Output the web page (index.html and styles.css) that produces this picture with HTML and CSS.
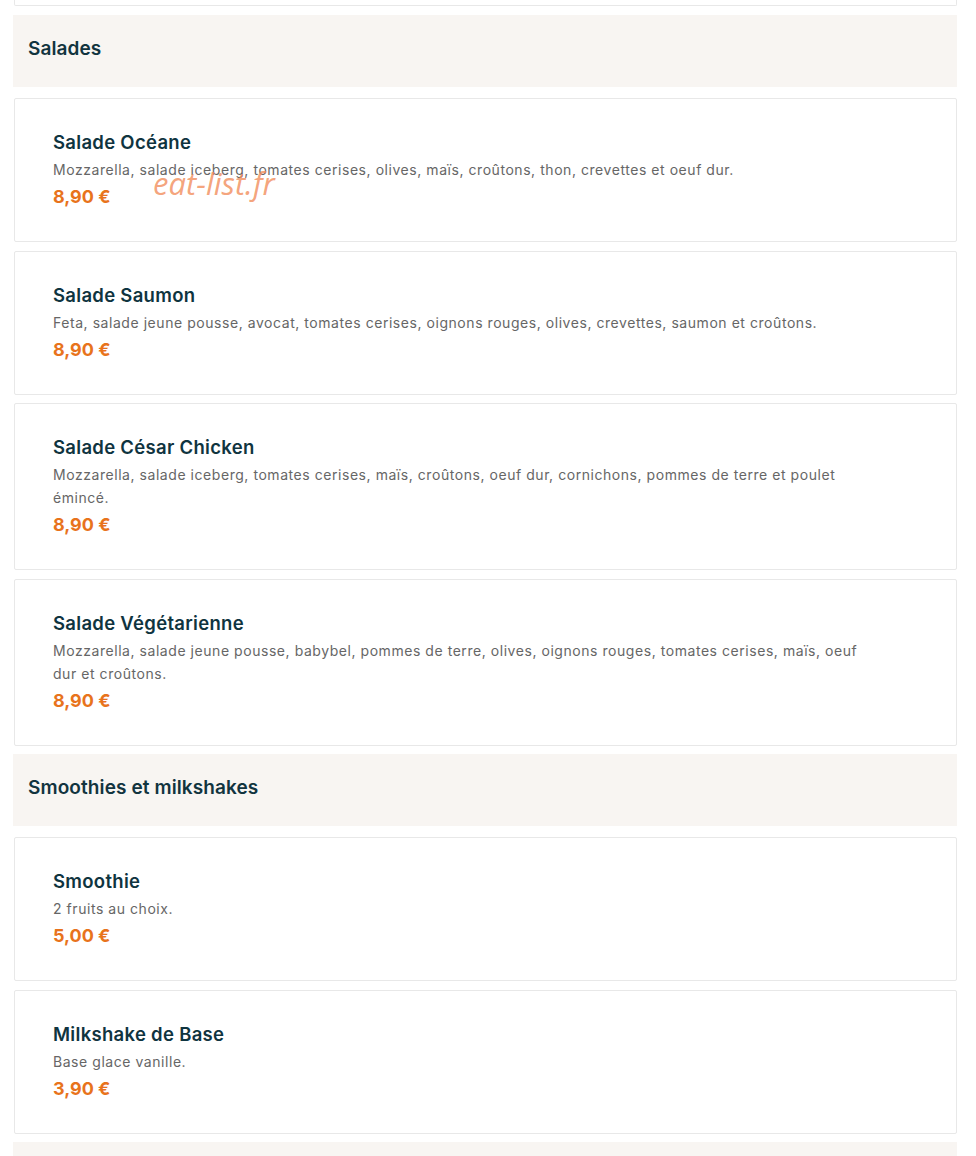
FILE: index.html
```html
<!DOCTYPE html>
<html lang="fr">
<head>
    <meta charset="UTF-8">
    <meta name="viewport" content="width=device-width, initial-scale=1.0">
    <title>Carte - Salades et smoothies</title>
    <link rel="stylesheet" href="styles.css">
</head>
<body>
<main class="menu">
    <div class="dish dish-cut"></div>

    <h2 class="category">Salades</h2>

    <div class="dish">
        <h3 class="dish-name">Salade Océane</h3>
        <p class="dish-desc">Mozzarella, salade iceberg, tomates cerises, olives, maïs, croûtons, thon, crevettes et oeuf dur.</p>
        <p class="dish-price">8,90 €</p>
        <span class="watermark">eat-list.fr</span>
    </div>

    <div class="dish">
        <h3 class="dish-name">Salade Saumon</h3>
        <p class="dish-desc">Feta, salade jeune pousse, avocat, tomates cerises, oignons rouges, olives, crevettes, saumon et croûtons.</p>
        <p class="dish-price">8,90 €</p>
    </div>

    <div class="dish">
        <h3 class="dish-name">Salade César Chicken</h3>
        <p class="dish-desc">Mozzarella, salade iceberg, tomates cerises, maïs, croûtons, oeuf dur, cornichons, pommes de terre et poulet émincé.</p>
        <p class="dish-price">8,90 €</p>
    </div>

    <div class="dish">
        <h3 class="dish-name">Salade Végétarienne</h3>
        <p class="dish-desc">Mozzarella, salade jeune pousse, babybel, pommes de terre, olives, oignons rouges, tomates cerises, maïs, oeuf dur et croûtons.</p>
        <p class="dish-price">8,90 €</p>
    </div>

    <h2 class="category">Smoothies et milkshakes</h2>

    <div class="dish">
        <h3 class="dish-name">Smoothie</h3>
        <p class="dish-desc">2 fruits au choix.</p>
        <p class="dish-price">5,00 €</p>
    </div>

    <div class="dish">
        <h3 class="dish-name">Milkshake de Base</h3>
        <p class="dish-desc">Base glace vanille.</p>
        <p class="dish-price">3,90 €</p>
    </div>

    <div class="category category-next"></div>
</main>
</body>
</html>
```

FILE: styles.css
```css
body {
    margin: 0;
    background: #fff;
    font-family: 'Inter', 'Noto Sans', sans-serif;
    color: #0f3440;
}
.menu {
    width: 943px;
    margin-left: 14px;
}
.category {
    margin: 0 0 11px -1px;
    padding: 21px 15px 25px;
    background: #f8f5f2;
    font-size: 19px;
    line-height: 26px;
    font-weight: 600;
    letter-spacing: 0.1px;
    color: #12343f;
}
.category-next {
    height: 26px;
    margin-bottom: 0;
}
.dish {
    position: relative;
    box-sizing: border-box;
    border: 1px solid #e8e8e8;
    border-radius: 2px;
    padding: 30px 38px 32px;
    margin-bottom: 8.5px;
    background: #fff;
}
.dish-cut {
    height: 6px;
    padding: 0;
    border-top: none;
    border-radius: 0 0 2px 2px;
    margin-bottom: 9px;
}
.dish-name {
    margin: 0 0 3px;
    font-size: 18.5px;
    line-height: 26px;
    font-weight: 600;
    letter-spacing: 0.3px;
    color: #0f3440;
}
.dish-desc {
    margin: 0 0 4px;
    max-width: 832px;
    font-size: 14px;
    line-height: 23px;
    letter-spacing: 0.55px;
    color: #666;
}
.dish-price {
    margin: 0;
    font-size: 18px;
    line-height: 24px;
    font-weight: 700;
    color: #e8731c;
}
.watermark {
    position: absolute;
    left: 138px;
    top: 66px;
    font-family: 'Open Sans', sans-serif;
    font-style: italic;
    font-size: 31px;
    line-height: 36px;
    color: rgba(242, 140, 90, 0.8);
}
```
